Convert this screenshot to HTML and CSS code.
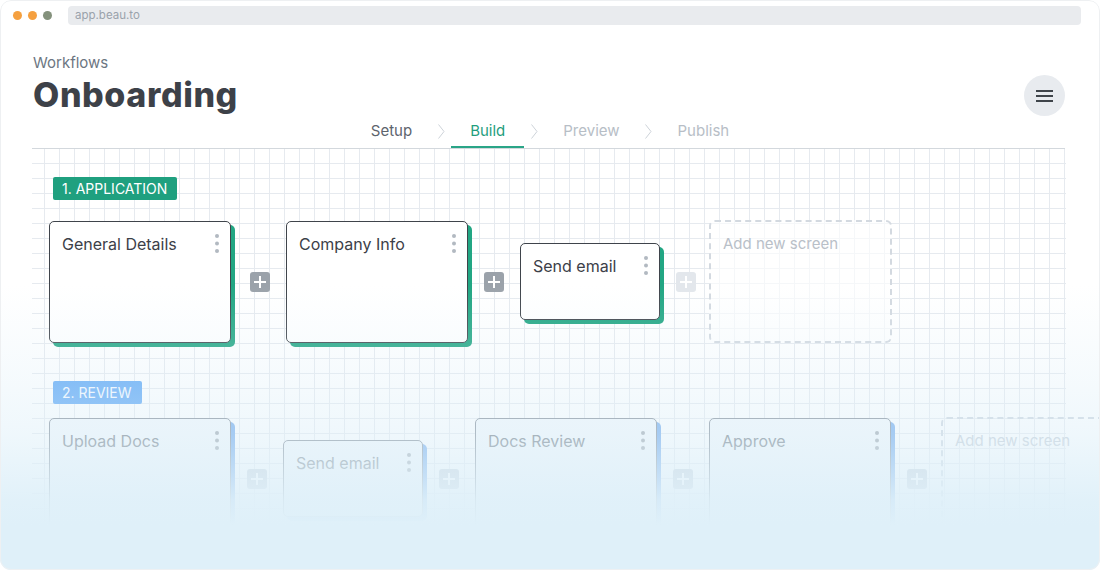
FILE: index.html
```html
<!DOCTYPE html>
<html lang="en">
<head>
<meta charset="utf-8">
<title>Onboarding – Workflows</title>
<link rel="stylesheet" href="styles.css">
</head>
<body>
<div class="window">
  <div class="topbar">
    <div class="lights">
      <span class="light"></span>
      <span class="light"></span>
      <span class="light light-green"></span>
    </div>
    <div class="url">app.beau.to</div>
  </div>

  <div class="header">
    <div class="titles">
      <div class="crumb">Workflows</div>
      <h1 class="title">Onboarding</h1>
    </div>
    <button class="menu" aria-label="Menu">
      <svg width="17" height="14" viewBox="0 0 17 14"><rect x="0" y="1" width="17" height="2" fill="#3f444a"/><rect x="0" y="6" width="17" height="2" fill="#3f444a"/><rect x="0" y="11" width="17" height="2" fill="#3f444a"/></svg>
    </button>
  </div>

  <nav class="tabs">
    <span class="tab tab-done">Setup</span>
    <span class="chev"><svg width="7" height="15" viewBox="0 0 7 15"><polyline points="0.5,0.5 6,7.5 0.5,14.5" fill="none" stroke="#cdd3d9" stroke-width="1"/></svg></span>
    <span class="tab tab-active">Build</span>
    <span class="chev"><svg width="7" height="15" viewBox="0 0 7 15"><polyline points="0.5,0.5 6,7.5 0.5,14.5" fill="none" stroke="#cdd3d9" stroke-width="1"/></svg></span>
    <span class="tab tab-todo">Preview</span>
    <span class="chev"><svg width="7" height="15" viewBox="0 0 7 15"><polyline points="0.5,0.5 6,7.5 0.5,14.5" fill="none" stroke="#cdd3d9" stroke-width="1"/></svg></span>
    <span class="tab tab-todo">Publish</span>
  </nav>

  <div class="canvas">
    <section class="stage">
      <div class="badge badge-green">1. APPLICATION</div>
      <div class="row">
        <div class="card">
          <div class="card-head"><span class="card-title">General Details</span>
            <svg class="kebab" width="4" height="19" viewBox="0 0 4 19"><circle cx="2" cy="2" r="2"/><circle cx="2" cy="9.5" r="2"/><circle cx="2" cy="17" r="2"/></svg></div>
        </div>
        <span class="plus plus-first"><svg width="12" height="12" viewBox="0 0 12 12"><rect x="5" y="0" width="2" height="12" fill="#fff"/><rect x="0" y="5" width="12" height="2" fill="#fff"/></svg></span>
        <div class="card">
          <div class="card-head"><span class="card-title">Company Info</span>
            <svg class="kebab" width="4" height="19" viewBox="0 0 4 19"><circle cx="2" cy="2" r="2"/><circle cx="2" cy="9.5" r="2"/><circle cx="2" cy="17" r="2"/></svg></div>
        </div>
        <span class="plus"><svg width="12" height="12" viewBox="0 0 12 12"><rect x="5" y="0" width="2" height="12" fill="#fff"/><rect x="0" y="5" width="12" height="2" fill="#fff"/></svg></span>
        <div class="card card-sm">
          <div class="card-head"><span class="card-title">Send email</span>
            <svg class="kebab" width="4" height="19" viewBox="0 0 4 19"><circle cx="2" cy="2" r="2"/><circle cx="2" cy="9.5" r="2"/><circle cx="2" cy="17" r="2"/></svg></div>
        </div>
        <span class="plus plus-faint"><svg width="12" height="12" viewBox="0 0 12 12"><rect x="5" y="0" width="2" height="12" fill="#fff"/><rect x="0" y="5" width="12" height="2" fill="#fff"/></svg></span>
        <div class="add">Add new screen</div>
      </div>
    </section>

    <section class="stage stage-review">
      <div class="badge badge-blue">2. REVIEW</div>
      <div class="row">
        <div class="card card-ghost">
          <div class="card-head"><span class="card-title">Upload Docs</span>
            <svg class="kebab" width="4" height="19" viewBox="0 0 4 19"><circle cx="2" cy="2" r="2"/><circle cx="2" cy="9.5" r="2"/><circle cx="2" cy="17" r="2"/></svg></div>
        </div>
        <span class="plus plus-ghost"><svg width="12" height="12" viewBox="0 0 12 12"><rect x="5" y="0" width="2" height="12" fill="#fff"/><rect x="0" y="5" width="12" height="2" fill="#fff"/></svg></span>
        <div class="card card-sm card-ghost">
          <div class="card-head"><span class="card-title">Send email</span>
            <svg class="kebab" width="4" height="19" viewBox="0 0 4 19"><circle cx="2" cy="2" r="2"/><circle cx="2" cy="9.5" r="2"/><circle cx="2" cy="17" r="2"/></svg></div>
        </div>
        <span class="plus plus-ghost"><svg width="12" height="12" viewBox="0 0 12 12"><rect x="5" y="0" width="2" height="12" fill="#fff"/><rect x="0" y="5" width="12" height="2" fill="#fff"/></svg></span>
        <div class="card card-ghost">
          <div class="card-head"><span class="card-title">Docs Review</span>
            <svg class="kebab" width="4" height="19" viewBox="0 0 4 19"><circle cx="2" cy="2" r="2"/><circle cx="2" cy="9.5" r="2"/><circle cx="2" cy="17" r="2"/></svg></div>
        </div>
        <span class="plus plus-ghost"><svg width="12" height="12" viewBox="0 0 12 12"><rect x="5" y="0" width="2" height="12" fill="#fff"/><rect x="0" y="5" width="12" height="2" fill="#fff"/></svg></span>
        <div class="card card-ghost">
          <div class="card-head"><span class="card-title">Approve</span>
            <svg class="kebab" width="4" height="19" viewBox="0 0 4 19"><circle cx="2" cy="2" r="2"/><circle cx="2" cy="9.5" r="2"/><circle cx="2" cy="17" r="2"/></svg></div>
        </div>
        <span class="plus plus-ghost"><svg width="12" height="12" viewBox="0 0 12 12"><rect x="5" y="0" width="2" height="12" fill="#fff"/><rect x="0" y="5" width="12" height="2" fill="#fff"/></svg></span>
        <div class="add add-ghost">Add new screen</div>
      </div>
    </section>
  </div>

  <div class="fade"></div>
</div>
</body>
</html>
```

FILE: styles.css
```css
* { box-sizing: border-box; }

html, body {
  margin: 0;
  padding: 0;
  background: #ffffff;
}

body {
  font-family: Inter, "Noto Sans", "Liberation Sans", sans-serif;
  color: #3c4048;
}

.window {
  position: relative;
  width: 1100px;
  height: 570px;
  overflow: hidden;
  background: #ffffff;
  border-radius: 11px;
}

.window::after {
  content: "";
  position: absolute;
  inset: 0;
  border: 1px solid #eef0f2;
  border-radius: 11px;
  pointer-events: none;
}

/* ---------- browser top bar ---------- */
.topbar {
  display: flex;
  align-items: center;
  height: 19px;
  margin-top: 6px;
  padding: 0 19px 0 13px;
}

.lights {
  display: flex;
  gap: 6px;
  width: 55px;
}

.light {
  width: 9px;
  height: 9px;
  border-radius: 50%;
  background: #f5a03f;
}

.light-green {
  background: #84917c;
}

.url {
  flex: 1;
  height: 19px;
  line-height: 19px;
  padding-left: 7px;
  border-radius: 4px;
  background: #e9ebee;
  color: #9aa2ab;
  font-size: 11.5px;
}

/* ---------- header ---------- */
.header {
  display: flex;
  justify-content: space-between;
  align-items: flex-start;
  padding: 0 35px 0 33px;
  margin-top: 29px;
}

.crumb {
  font-size: 15px;
  line-height: 18px;
  color: #6c7682;
}

.title {
  margin: 4px 0 0;
  font-size: 34px;
  line-height: 38px;
  font-weight: 800;
  color: #3d4148;
  letter-spacing: 0.6px;
}

.menu {
  margin-top: 21px;
  width: 41px;
  height: 41px;
  border: 0;
  padding: 0;
  border-radius: 50%;
  background: #e8ebef;
  display: flex;
  align-items: center;
  justify-content: center;
}

/* ---------- tabs ---------- */
.tabs {
  display: flex;
  justify-content: center;
  margin: 6px 35px 0 32px;
  padding-left: 3px;
  border-bottom: 1px solid #d3d8dd;
}

.tab {
  padding: 0 19px 8px;
  font-size: 15px;
  line-height: 18px;
}

.tab-done { color: #5d646d; }
.tab-todo { color: #b7bec6; }

.tab-active {
  color: #1f9e7e;
  box-shadow: inset 0 -2px 0 #2aa587;
}

.chev {
  width: 20px;
  height: 18px;
  display: flex;
  align-items: center;
  justify-content: center;
}

/* ---------- canvas ---------- */
.canvas {
  margin: 0 34px 0 32px;
  height: 430px;
  padding: 28px 0 0 17px;
  background-color: #ffffff;
  background-image:
    linear-gradient(to right, #e6eaef 1px, transparent 1px),
    linear-gradient(to bottom, #e6eaef 1px, transparent 1px);
  background-size: 15px 15px;
  background-position: 12px 14px;
}

.badge {
  display: inline-block;
  margin-left: 4px;
  height: 23px;
  line-height: 23px;
  padding: 0 10px 0 9px;
  border-radius: 2px;
  font-size: 14px;
  color: #ffffff;
}

.badge-green { background: #1fa07f; }
.badge-blue { background: #5fa8f5; color: #f4f9ff; }

.row {
  display: flex;
  align-items: center;
  gap: 16px;
  margin-top: 20px;
  white-space: nowrap;
}

.stage-review {
  margin-top: 38px;
}

.stage-review .row {
  margin-top: 13px;
}

.card {
  flex: none;
  width: 182px;
  height: 122px;
  border: 1px solid #3f444b;
  border-radius: 5px;
  background: #ffffff;
  box-shadow: 4px 4px 0 #22a683;
  padding: 12px 11px 0 12px;
}

.card-sm {
  width: 140px;
  height: 77px;
}

.card-head {
  display: flex;
  justify-content: space-between;
  align-items: flex-start;
}

.card-title {
  font-size: 16px;
  line-height: 20px;
  color: #3c4048;
}

.kebab {
  fill: #b2b9c1;
  flex: none;
}

.plus {
  flex: none;
  width: 20px;
  height: 20px;
  border-radius: 3px;
  background: #9ba2aa;
  display: flex;
  align-items: center;
  justify-content: center;
}

.plus-first { margin-left: 3px; }

.plus-faint { background: #e3e7ec; }

.add {
  flex: none;
  margin-left: -3px;
  width: 183px;
  height: 123px;
  border: 2px dashed #d3d9e0;
  border-radius: 6px;
  padding: 13px 13px 0 12px;
  font-size: 15px;
  line-height: 18px;
  color: #b9c0c8;
  background: rgba(255, 255, 255, 0.6);
}

/* review stage, locked / faded */
.card-ghost {
  border-color: #7f8893;
  background: #f3f8fc;
  box-shadow: 4px 4px 0 #6fa8ec;
}

.card-ghost .card-title { color: #6f7882; }
.card-ghost .kebab { fill: #9ba3ab; }

.plus-ghost { background: #c5ced8; }

.add-ghost {
  margin-left: -2px;
  border-color: #cdd5de;
  color: #c4ccd5;
  background: transparent;
}

/* bottom fade */
.fade {
  position: absolute;
  left: 0;
  right: 0;
  bottom: 0;
  height: 285px;
  pointer-events: none;
  background: linear-gradient(to bottom,
    rgba(223, 240, 249, 0) 0px,
    rgba(223, 240, 249, 0.3) 95px,
    rgba(223, 240, 249, 0.5) 150px,
    rgba(223, 240, 249, 0.93) 215px,
    rgba(223, 240, 249, 1) 240px);
}
```
